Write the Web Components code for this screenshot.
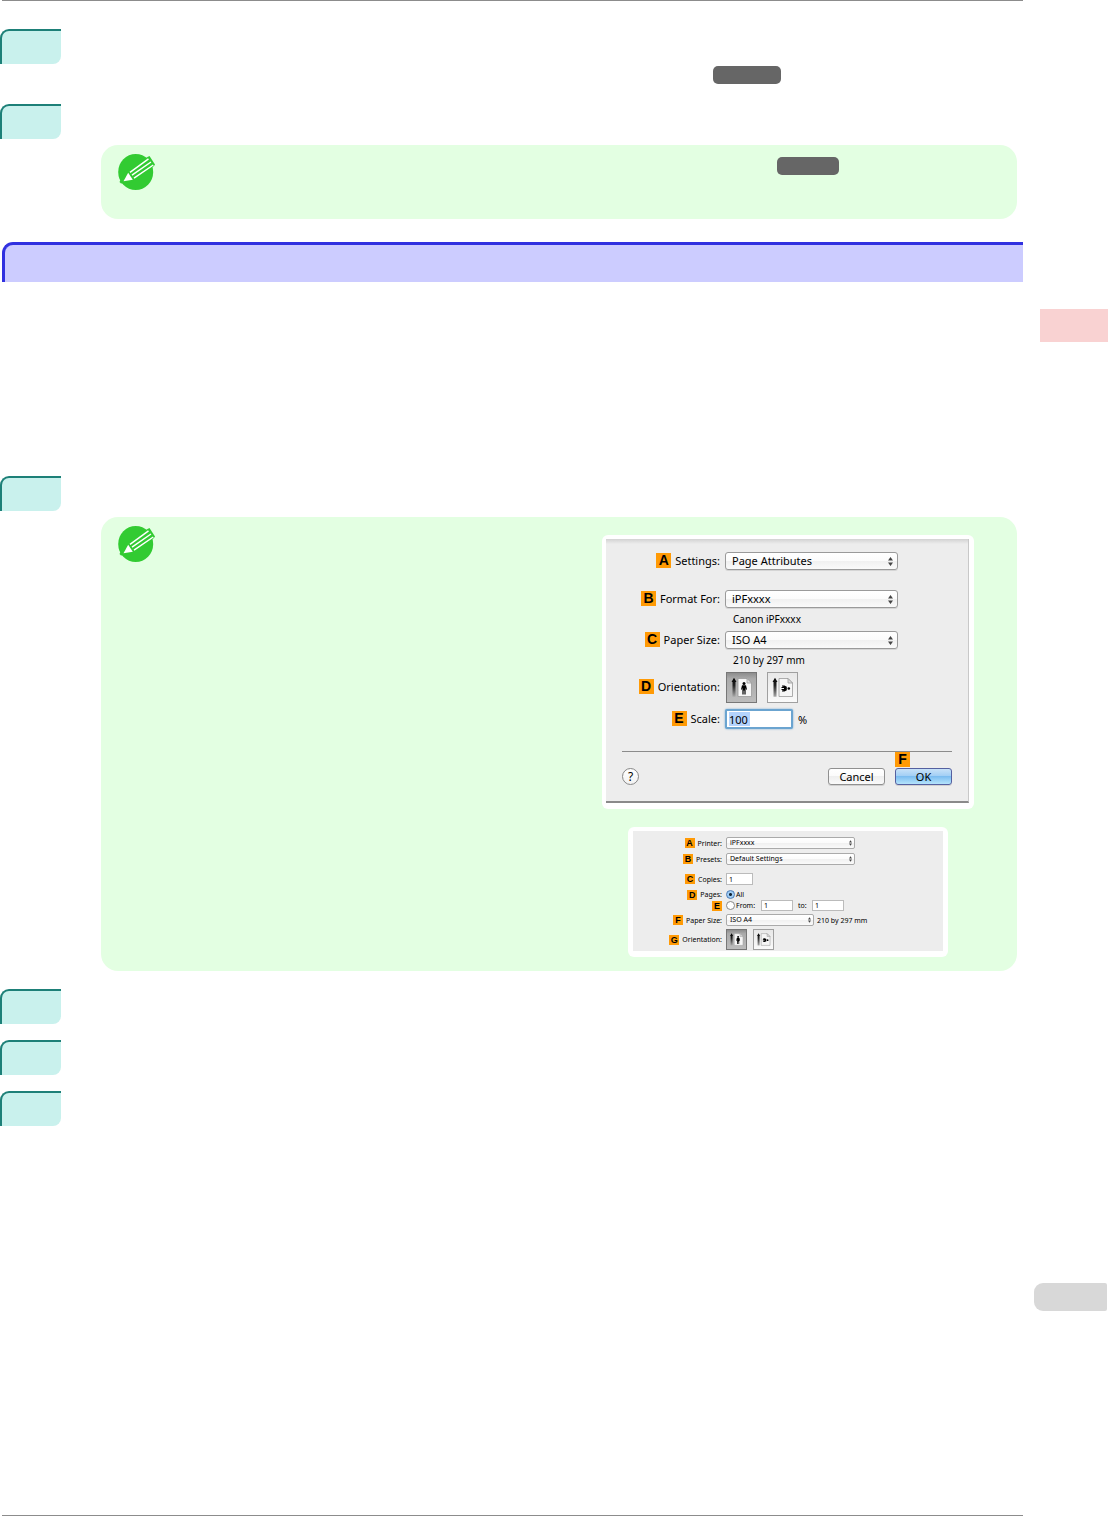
<!DOCTYPE html>
<html lang="en">
<head>
<meta charset="utf-8">
<title>Printing from Mac OS X</title>
<style>
	body {
		margin: 0;
		background: #fff;
		color: #000;
		font-family: "Noto Sans", "Open Sans", sans-serif;
	}
</style>
</head>
<body>
<manual-page>
	<manual-step class="reference">
		<page-ref></page-ref>
	</manual-step>
	<manual-step class="with-note">
		<manual-note><page-ref class="short"></page-ref></manual-note>
	</manual-step>
	<manual-heading></manual-heading>
	<manual-step class="with-note figures">
		<manual-note>
			<page-setup-dialog slot="figure"></page-setup-dialog>
			<print-dialog slot="figure"></print-dialog>
		</manual-note>
	</manual-step>
	<manual-step></manual-step>
	<manual-step></manual-step>
	<manual-step></manual-step>
</manual-page>

<script>
function makeTemplate(html) {
	const template = document.createElement('template');
	template.innerHTML = html;
	return template;
}

function defineElement(name, template) {
	if (window.customElements.get(name)) {
		return;
	}
	window.customElements.define(name, class extends HTMLElement {
		constructor() {
			super();
			this.attachShadow({ mode: 'open' });
			this.shadowRoot.appendChild(template.content.cloneNode(true));
		}
	});
}

// page frame: content column and the chapter tabs on the right
defineElement('manual-page', makeTemplate(`
	<style>
		:host {
			display: grid;
			grid-template-columns: 1fr 85px;
			min-height: 100vh;
		}
		main {
			display: flex;
			flex-direction: column;
		}
		hr {
			width: calc(100% - 2px);
			height: 1px;
			margin: 0 0 0 2px;
			border: 0;
			background: #8c8c8c;
		}
		.content {
			flex: 1;
			padding-top: 28px;
		}
		aside {
			display: flex;
			flex-direction: column;
			align-items: flex-end;
			justify-content: space-between;
			padding: 309px 0 205px;
		}
		.chapter {
			width: 68px;
			height: 33px;
			background: #f9d2d2;
		}
		.number {
			width: 73px;
			height: 28px;
			margin-right: 1px;
			border-radius: 9px 2px 2px 9px;
			background: #d8d8d8;
		}
		::slotted(.reference) {
			min-height: 75px;
		}
		::slotted(manual-heading) {
			margin: 23px 0 194px 2px;
		}
		::slotted(.figures) {
			margin-bottom: 18px;
		}
	</style>
	<main>
		<hr>
		<div class="content"><slot></slot></div>
		<hr>
	</main>
	<aside>
		<div class="chapter"></div>
		<div class="number"></div>
	</aside>
`));

defineElement('manual-step', makeTemplate(`
	<style>
		:host {
			display: grid;
			grid-template-columns: 61px 1fr;
			column-gap: 40px;
			align-items: start;
			box-sizing: border-box;
			min-height: 51px;
			padding-right: 6px;
		}
		.tab {
			box-sizing: border-box;
			height: 35px;
			border-top: 2px solid #1d8078;
			border-left: 2px solid #1d8078;
			border-radius: 9px 0 8px 0;
			background: #c9f1ed;
		}
		::slotted(page-ref) {
			margin: 37px 0 0 612px;
		}
		::slotted(manual-note) {
			margin-top: 41px;
		}
	</style>
	<div class="tab"></div>
	<div><slot></slot></div>
`));

defineElement('manual-heading', makeTemplate(`
	<style>
		:host {
			display: block;
			box-sizing: border-box;
			height: 40px;
			border-top: 3px solid #3030e0;
			border-left: 3px solid #3030e0;
			border-radius: 11px 0 0 0;
			background: #ccccff;
		}
	</style>
	<slot></slot>
`));

defineElement('page-ref', makeTemplate(`
	<style>
		:host {
			display: block;
			width: 68px;
			height: 18px;
			border-radius: 5px;
			background: #666;
		}
		:host(.short) {
			width: 62px;
		}
	</style>
`));

// green note with the pencil mark, text in the middle, figures on the right
defineElement('manual-note', makeTemplate(`
	<style>
		:host {
			display: flex;
			align-items: flex-start;
			box-sizing: border-box;
			min-height: 74px;
			border-radius: 17px;
			background: #e3ffe2;
		}
		svg {
			flex: none;
			width: 38px;
			height: 38px;
			margin: 9px 0 0 17px;
		}
		.text {
			flex: 1;
		}
		.text ::slotted(page-ref) {
			margin: 12px 0 0 621px;
		}
		.figures {
			display: flex;
			flex-direction: column;
			align-items: center;
			gap: 18px;
			margin-right: 43px;
		}
		.figures ::slotted(page-setup-dialog) {
			margin-top: 18px;
		}
		.figures ::slotted(print-dialog) {
			margin-bottom: 14px;
		}
	</style>
	<svg viewBox="0 0 38 38" aria-hidden="true">
		<ellipse cx="17.700" cy="18" rx="17.500" ry="18" fill="#32cb32"/>
		<path d="M1.500 28L7 17L29.500 3L31.500 2L37 10.500L36 12L15 28L3 29.500Z" fill="#32cb32"/>
		<path d="M5.500 27.300L10.200 18.800L14.800 25.800Z" fill="#fff"/>
		<path d="M12 18.300L30.500 4.900M14 21.200L33 8M16 24.100L35.300 11" stroke="#fff" stroke-width="1.500" fill="none"/>
	</svg>
	<div class="text"><slot></slot></div>
	<div class="figures"><slot name="figure"></slot></div>
`));

defineElement('letter-badge', makeTemplate(`
	<style>
		:host {
			display: inline-block;
			width: var(--badge-size, 15px);
			height: var(--badge-size, 15px);
			background: #ff9a05;
			color: #000;
			font: bold var(--badge-font, 14px)/var(--badge-size, 15px) "Liberation Sans", sans-serif;
			text-align: center;
		}
	</style>
	<slot></slot>
`));

defineElement('popup-arrows', makeTemplate(`
	<style>
		:host {
			position: absolute;
			top: 0;
			right: var(--arrows-right, 5px);
			bottom: 0;
			display: flex;
			align-items: center;
			pointer-events: none;
		}
		svg {
			width: var(--arrows-width, 5px);
			height: var(--arrows-height, 9px);
		}
	</style>
	<svg viewBox="0 0 5 9" aria-hidden="true">
		<path d="M2.500 0L5 3.500H0ZM2.500 9L0 5.500H5Z" fill="#444"/>
	</svg>
`));

// upright page by default, lying figure with class "landscape"
defineElement('orientation-icon', makeTemplate(`
	<style>
		:host {
			display: block;
		}
		svg {
			display: block;
			width: 100%;
			height: 100%;
		}
		.lying, :host(.landscape) .standing {
			display: none;
		}
		:host(.landscape) .lying {
			display: inline;
		}
	</style>
	<svg viewBox="1 1 29 29" aria-hidden="true">
		<defs>
			<linearGradient id="fade" x1="0" y1="0" x2="0" y2="1">
				<stop offset="0" stop-color="#000"/>
				<stop offset="0.400" stop-color="#222"/>
				<stop offset="1" stop-color="#aaa"/>
			</linearGradient>
		</defs>
		<path d="M8 5.800L10.500 10H9.500V24.800H6.500V10H5.500Z" fill="url(#fade)"/>
		<path d="M12 6.500H21L25.500 11V24.500H12Z" fill="#f6f6f6" stroke="#9a9a9a" stroke-width="0.800"/>
		<path d="M21 6.500V11H25.500Z" fill="#ddd" stroke="#9a9a9a" stroke-width="0.800"/>
		<g class="standing">
			<circle cx="18" cy="11.500" r="1.500"/>
			<path d="M16 13.300H20L21 17.500L20.300 17.800L19.600 16V22.500H18.400V18.500H17.600V22.500H16.400V16L15.700 17.800L15 17.500Z"/>
		</g>
		<g class="lying">
			<circle cx="21.800" cy="16.500" r="1.300"/>
			<path d="M19.800 14.700V18.300L17.500 19.500H15V18.500L17 18H14.500V16.900H17V16.100H14.500V15L17 14.900L15 14.400V13.500H17.500Z"/>
		</g>
	</svg>
`));

// controls that both print dialogs share
const dialogStyles = `
	:host {
		display: block;
		box-sizing: border-box;
		border-radius: 6px;
		background: #fff;
	}
	form {
		display: grid;
		grid-auto-rows: auto;
		align-items: center;
		box-sizing: border-box;
		background: #ededed;
	}
	.label {
		display: flex;
		align-items: center;
		justify-content: flex-end;
		white-space: nowrap;
	}
	.controls {
		display: flex;
		align-items: center;
		white-space: nowrap;
	}
	.popup {
		position: relative;
	}
	select, input, button {
		appearance: none;
		display: block;
		box-sizing: border-box;
		margin: 0;
		padding: 0;
		border: 1px solid #999;
		border-radius: 0;
		outline: 0;
		background: #fff;
		color: #000;
		font: inherit;
	}
	select {
		width: 100%;
		border-color: #9a9a9a;
		background: linear-gradient(#fff, #fbfbfb 50%, #f0f0f0 50%, #fafafa);
	}
	.orientation {
		border-color: #a0a0a0;
		background: linear-gradient(#e8e8e8, #fafafa);
	}
	.orientation.chosen {
		border-color: #777;
		background: linear-gradient(#8d8d8d, #aaa 20%, #bcbcbc);
	}
`;

defineElement('page-setup-dialog', makeTemplate(`
	<style>
		${dialogStyles}
		:host {
			padding: 4px 5px 6px 4px;
			font-size: 11px;
			line-height: 15px;
		}
		form {
			grid-template-columns: 98px 173px 1fr;
			column-gap: 5px;
			width: 363px;
			padding: 13px 16px 16px;
			border-right: 1px solid #c8c8c8;
			border-bottom: 2px solid #8a8a8a;
			background: linear-gradient(#d2d2d2, #ededed 5px);
		}
		.label {
			grid-column: 1;
			gap: 4px;
			padding-bottom: 2px;
		}
		.controls {
			grid-column: 2 / 4;
		}
		.popup {
			width: 173px;
		}
		select {
			height: 18px;
			padding: 0 0 1px 6px;
			border-radius: 3px;
			box-shadow: 0 1px 0 #d5d5d5;
		}
		.hint {
			grid-column: 2;
			height: 23px;
			padding-left: 8px;
			font-size: 10px;
			line-height: 22px;
		}
		.first {
			margin-bottom: 20px;
		}
		.orientation {
			width: 31px;
			height: 31px;
			margin: 0 9px 0 1px;
		}
		.row-scale {
			margin-top: 6px;
		}
		#scale {
			width: 68px;
			height: 20px;
			margin-right: 5px;
			padding-left: 2px;
			border: 2px solid #6ba4d0;
			border-radius: 2px;
			background: linear-gradient(#b3d3fd, #b3d3fd) 2px 1px / 21px 14px no-repeat #fff;
			box-shadow: 0 0 2px #6ba4d0;
		}
		footer {
			grid-column: 1 / 4;
			display: flex;
			align-items: center;
			gap: 10px;
			margin-top: 22px;
			padding-top: 16px;
			border-top: 1px solid #8c8c8c;
		}
		.help {
			width: 17px;
			height: 17px;
			margin-right: auto;
			border-color: #888;
			border-radius: 50%;
			background: linear-gradient(#fff, #f2f2f2);
			font-size: 12px;
			line-height: 15px;
		}
		.push {
			width: 57px;
			height: 17px;
			border-color: #909090;
			border-radius: 3px;
			background: linear-gradient(#fff, #fbfbfb 50%, #efefef 50%, #fafafa);
			box-shadow: 0 1px 0 #d0d0d0;
		}
		.default {
			position: relative;
		}
		.default .push {
			border-color: #5560a0;
			background: linear-gradient(#c8e2f8, #9fcdf4 50%, #7cbdf0 50%, #b5e4fc);
		}
		.default letter-badge {
			position: absolute;
			top: -16px;
			left: 0;
		}
	</style>
	<form>
		<div class="label first"><letter-badge>A</letter-badge><label for="settings">Settings:</label></div>
		<div class="controls first">
			<div class="popup"><select id="settings"><option>Page Attributes</option></select><popup-arrows></popup-arrows></div>
		</div>
		<div class="label"><letter-badge>B</letter-badge><label for="format">Format For:</label></div>
		<div class="controls">
			<div class="popup"><select id="format"><option>iPFxxxx</option></select><popup-arrows></popup-arrows></div>
		</div>
		<div class="hint">Canon iPFxxxx</div>
		<div class="label"><letter-badge>C</letter-badge><label for="paper">Paper Size:</label></div>
		<div class="controls">
			<div class="popup"><select id="paper"><option>ISO A4</option></select><popup-arrows></popup-arrows></div>
		</div>
		<div class="hint">210 by 297 mm</div>
		<div class="label"><letter-badge>D</letter-badge><label for="portrait">Orientation:</label></div>
		<div class="controls">
			<button type="button" id="portrait" class="orientation chosen"><orientation-icon></orientation-icon></button>
			<button type="button" class="orientation" aria-label="Landscape"><orientation-icon class="landscape"></orientation-icon></button>
		</div>
		<div class="label row-scale"><letter-badge>E</letter-badge><label for="scale">Scale:</label></div>
		<div class="controls row-scale"><input type="text" id="scale" value="100"> %</div>
		<footer>
			<button type="button" class="help">?</button>
			<button type="button" class="push">Cancel</button>
			<div class="default"><letter-badge>F</letter-badge><button type="button" class="push">OK</button></div>
		</footer>
	</form>
`));

defineElement('print-dialog', makeTemplate(`
	<style>
		${dialogStyles}
		:host {
			--badge-size: 10px;
			--badge-font: 9px;
			--arrows-width: 3px;
			--arrows-height: 6px;
			--arrows-right: 3px;
			padding: 4px 5px 6px;
			font-size: 7px;
			line-height: 11px;
		}
		form {
			grid-template-columns: 89px 1fr;
			column-gap: 4px;
			width: 310px;
			padding: 6px 0 1px;
		}
		.label {
			gap: 3px;
		}
		select {
			height: 12px;
			padding-left: 3px;
			border-color: #aaa;
			border-radius: 2px;
			line-height: 10px;
		}
		.popup {
			width: 129px;
		}
		.paper {
			width: 88px;
			margin-right: 3px;
		}
		.space-small {
			margin-bottom: 4px;
		}
		.space-large {
			margin-bottom: 8px;
		}
		.space-row {
			margin-bottom: 3px;
		}
		input[type="text"] {
			width: 32px;
			height: 11px;
			padding-left: 2px;
			border-color: #bbb;
			line-height: 9px;
		}
		#copies {
			width: 27px;
			height: 12px;
		}
		input[type="radio"] {
			width: 9px;
			height: 9px;
			margin-right: 1px;
			border-color: #888;
			border-radius: 50%;
		}
		input[type="radio"]:checked {
			border-color: #4a7ab5;
			background: radial-gradient(circle, #123 0 1px, #9fcdf5 2px);
		}
		.from {
			width: 25px;
		}
		.to {
			width: 9px;
			margin: 0 5px;
		}
		.orientation {
			width: 21px;
			height: 21px;
			margin-right: 6px;
		}
	</style>
	<form>
		<div class="label space-small"><letter-badge>A</letter-badge><label for="printer">Printer:</label></div>
		<div class="controls space-small">
			<div class="popup"><select id="printer"><option>iPFxxxx</option></select><popup-arrows></popup-arrows></div>
		</div>
		<div class="label space-large"><letter-badge>B</letter-badge><label for="presets">Presets:</label></div>
		<div class="controls space-large">
			<div class="popup"><select id="presets"><option>Default Settings</option></select><popup-arrows></popup-arrows></div>
		</div>
		<div class="label space-small"><letter-badge>C</letter-badge><label for="copies">Copies:</label></div>
		<div class="controls space-small"><input type="text" id="copies" value="1"></div>
		<div class="label"><letter-badge>D</letter-badge><span>Pages:</span></div>
		<div class="controls"><input type="radio" name="pages" id="all" checked><label for="all">All</label></div>
		<div class="label space-row"><letter-badge>E</letter-badge></div>
		<div class="controls space-row">
			<input type="radio" name="pages" id="range"><label for="range" class="from">From:</label>
			<input type="text" aria-label="From" value="1">
			<label for="last" class="to">to:</label>
			<input type="text" id="last" value="1">
		</div>
		<div class="label space-row"><letter-badge>F</letter-badge><label for="size">Paper Size:</label></div>
		<div class="controls space-row">
			<div class="popup paper"><select id="size"><option>ISO A4</option></select><popup-arrows></popup-arrows></div>
			<span>210 by 297 mm</span>
		</div>
		<div class="label"><letter-badge>G</letter-badge><label for="upright">Orientation:</label></div>
		<div class="controls">
			<button type="button" id="upright" class="orientation chosen"><orientation-icon></orientation-icon></button>
			<button type="button" class="orientation" aria-label="Landscape"><orientation-icon class="landscape"></orientation-icon></button>
		</div>
	</form>
`));
</script>
</body>
</html>
